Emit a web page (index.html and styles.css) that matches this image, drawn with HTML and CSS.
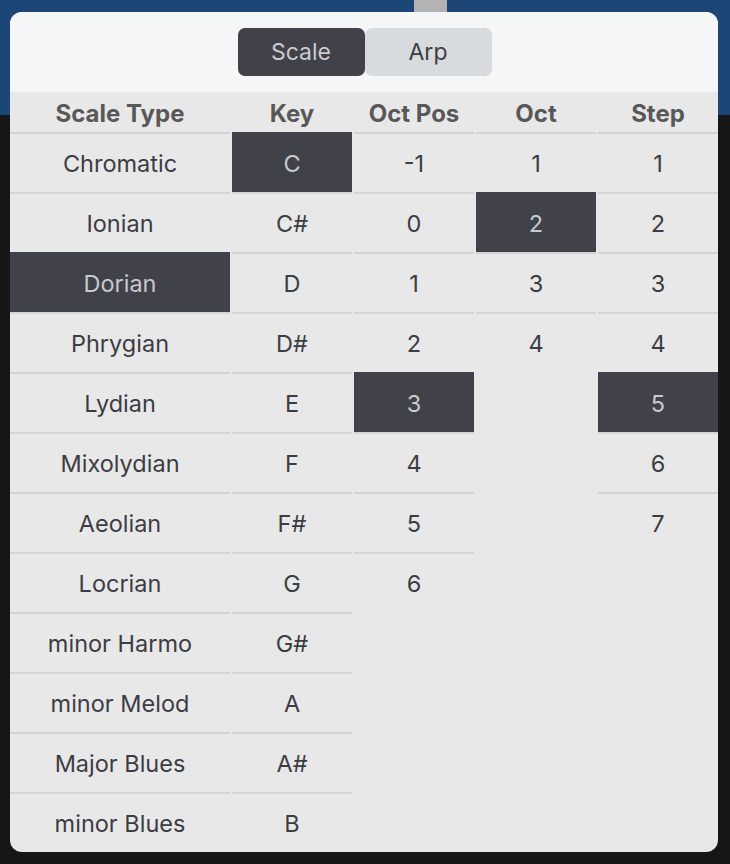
FILE: index.html
```html
<!DOCTYPE html>
<html lang="en">
<head>
  <meta charset="UTF-8">
  <meta name="viewport" content="width=device-width, initial-scale=1.0">
  <title>Scale Picker</title>
  <link rel="stylesheet" href="styles.css">
</head>
<body>

<div class="backdrop">
  <span class="backdrop-slider"></span>
</div>

<div class="popover">
  <div class="popover-top">
    <div class="segmented">
      <button class="segment active">Scale</button>
      <button class="segment">Arp</button>
    </div>
  </div>

  <div class="picker">
    <!-- Scale Type -->
    <div class="column wide">
      <div class="column-head">Scale Type</div>
      <div class="cell">Chromatic</div>
      <div class="cell">Ionian</div>
      <div class="cell selected">Dorian</div>
      <div class="cell">Phrygian</div>
      <div class="cell">Lydian</div>
      <div class="cell">Mixolydian</div>
      <div class="cell">Aeolian</div>
      <div class="cell">Locrian</div>
      <div class="cell">minor Harmo</div>
      <div class="cell">minor Melod</div>
      <div class="cell">Major Blues</div>
      <div class="cell">minor Blues</div>
    </div>

    <!-- Key -->
    <div class="column">
      <div class="column-head">Key</div>
      <div class="cell selected">C</div>
      <div class="cell">C#</div>
      <div class="cell">D</div>
      <div class="cell">D#</div>
      <div class="cell">E</div>
      <div class="cell">F</div>
      <div class="cell">F#</div>
      <div class="cell">G</div>
      <div class="cell">G#</div>
      <div class="cell">A</div>
      <div class="cell">A#</div>
      <div class="cell">B</div>
    </div>

    <!-- Oct Pos -->
    <div class="column">
      <div class="column-head">Oct Pos</div>
      <div class="cell">-1</div>
      <div class="cell">0</div>
      <div class="cell">1</div>
      <div class="cell">2</div>
      <div class="cell selected">3</div>
      <div class="cell">4</div>
      <div class="cell">5</div>
      <div class="cell">6</div>
    </div>

    <!-- Oct -->
    <div class="column">
      <div class="column-head">Oct</div>
      <div class="cell">1</div>
      <div class="cell selected">2</div>
      <div class="cell">3</div>
      <div class="cell">4</div>
    </div>

    <!-- Step -->
    <div class="column">
      <div class="column-head">Step</div>
      <div class="cell">1</div>
      <div class="cell">2</div>
      <div class="cell">3</div>
      <div class="cell">4</div>
      <div class="cell selected">5</div>
      <div class="cell">6</div>
      <div class="cell">7</div>
    </div>
  </div>
</div>

</body>
</html>
```

FILE: styles.css
```css
* {
  box-sizing: border-box;
  margin: 0;
  padding: 0;
}

body {
  font-family: Inter, "Liberation Sans", sans-serif;
  background: linear-gradient(#1c4676 0, #1c4676 115px, #161616 115px);
  height: 864px;
  overflow: hidden;
  padding: 12px 12px 0 10px;
}

/* strip of the synth screen behind the popover */
.backdrop {
  position: absolute;
  top: 0;
  left: 0;
  width: 730px;
  height: 12px;
}

.backdrop-slider {
  position: absolute;
  left: 414px;
  top: 0;
  width: 33px;
  height: 12px;
  background-color: #b3b3b3;
}

.popover {
  position: relative;
  width: 708px;
  height: 840px;
  border-radius: 12px;
  overflow: hidden;
  background-color: #e8e8e8;
  display: flex;
  flex-direction: column;
}

.popover-top {
  background-color: #f5f6f7;
  height: 80px;
  display: flex;
  justify-content: center;
  align-items: center;
}

.segmented {
  display: flex;
  margin-left: 1px;
}

.segment {
  width: 127px;
  height: 48px;
  border: none;
  border-radius: 7px;
  font-family: inherit;
  font-size: 23px;
  background-color: #d8dbdd;
  color: #3d3d44;
}

.segment.active {
  background-color: #41414a;
  color: #cacacf;
}

.picker {
  display: flex;
  gap: 2px;
  flex: 1;
}

.column {
  width: 120px;
  display: flex;
  flex-direction: column;
}

.column.wide {
  width: 220px;
}

.column-head {
  height: 40px;
  color: #585858;
  font-size: 24px;
  font-weight: 700;
  display: flex;
  justify-content: center;
  align-items: center;
  padding-top: 3px;
}

.cell {
  height: 60px;
  border-top: 2px solid #d3d3d3;
  color: #3c3c44;
  font-size: 23.5px;
  display: flex;
  justify-content: center;
  align-items: center;
  padding-top: 1px;
}

.cell.selected {
  background-color: #41414a;
  border-top-color: #41414a;
  color: #c8c8cd;
}
```
